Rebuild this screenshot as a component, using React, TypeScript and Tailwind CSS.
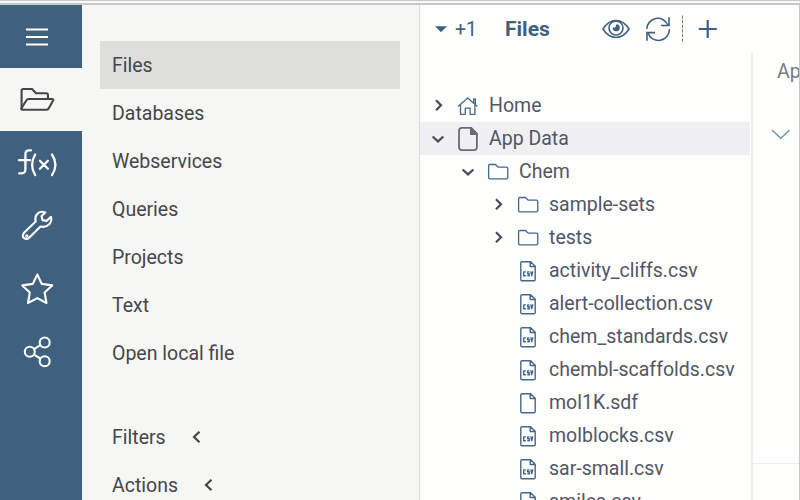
import React from "react";

type Kind = "home" | "page" | "folder" | "csv" | "file";
type Row = { label: string; kind: Kind; level: number; arrow?: "right" | "down"; selected?: boolean };

const rows: Row[] = [
  { label: "Home", kind: "home", level: 0, arrow: "right" },
  { label: "App Data", kind: "page", level: 0, arrow: "down", selected: true },
  { label: "Chem", kind: "folder", level: 1, arrow: "down" },
  { label: "sample-sets", kind: "folder", level: 2, arrow: "right" },
  { label: "tests", kind: "folder", level: 2, arrow: "right" },
  { label: "activity_cliffs.csv", kind: "csv", level: 2 },
  { label: "alert-collection.csv", kind: "csv", level: 2 },
  { label: "chem_standards.csv", kind: "csv", level: 2 },
  { label: "chembl-scaffolds.csv", kind: "csv", level: 2 },
  { label: "mol1K.sdf", kind: "file", level: 2 },
  { label: "molblocks.csv", kind: "csv", level: 2 },
  { label: "sar-small.csv", kind: "csv", level: 2 },
  { label: "smiles.csv", kind: "csv", level: 2 },
];

const navItems = ["Files", "Databases", "Webservices", "Queries", "Projects", "Text", "Open local file"];
const indents = ["pl-0", "pl-[30px]", "pl-[60px]"];

function RailIcon({ children, active = false }: { children: React.ReactNode; active?: boolean }) {
  return (
    <div className={`h-[63px] w-[82px] shrink-0 ${active ? "bg-[#f6f6f5] text-[#46464a]" : "text-[#fdfdfc]"}`}>
      <svg className="block h-[63px] w-[82px]" viewBox="0 0 82 63" fill="none" stroke="currentColor" strokeWidth="2.1" strokeLinejoin="round" strokeLinecap="round">
        {children}
      </svg>
    </div>
  );
}

function Arrow({ dir }: { dir?: "right" | "down" }) {
  return (
    <svg className="block h-[33px] w-9 shrink-0" viewBox="0 0 36 33" fill="none" stroke="#474b59" strokeWidth="2.2">
      {dir === "right" && <path d="M16 11.3 21 16.3 16 21.3" />}
      {dir === "down" && <path d="M12.6 14.5 18 19.4 23.4 14.5" />}
    </svg>
  );
}

function RowIcon({ kind }: { kind: Kind }) {
  return (
    <svg className="block h-[33px] w-[33px] shrink-0" viewBox="0 0 33 33" fill="none" stroke="#45678b" strokeWidth="1.3" strokeLinejoin="round">
      {kind === "home" && (
        <>
          <path d="M2 17.5 11.7 9 21.4 17.5M17.7 13.8V10h1.6v5.2" />
          <path d="M4.5 16v9.4h4.8v-6.2h4.8v6.2h4.8V16" />
        </>
      )}
      {kind === "page" && (
        <>
          <path stroke="#6b6b78" strokeWidth="1.8" d="M6 5.9h9L20.9 12v13q0 3.1-3 3.1H6q-3 0-3-3.1V9q0-3.1 3-3.1Z" />
          <path fill="#6b6b78" stroke="none" d="M14 5h1.5L21.8 11.5V13H14Z" />
        </>
      )}
      {kind === "folder" && (
        <path d="M3.7 9.5h5.8l2.8 2.7h8q1.5 0 1.5 1.5v8.9q0 1.2-1.3 1.2H3.8q-1.2 0-1.2-1.2V10.8q0-1.3 1.1-1.3Z" />
      )}
      {(kind === "csv" || kind === "file") && (
        <>
          <path strokeWidth="1.4" d="M6 7.7h8.6l4.6 4.6v13.2q0 1.2-1.2 1.2H6q-1.2 0-1.2-1.2V8.9Q4.8 7.7 6 7.7ZM14.2 7.7v4.8h5" />
          {kind === "csv" && (
            <path strokeWidth="1.4" d="M9.9 17.9H7.7v3.9h2.2M13.4 17.9h-1.7v1.9h1.6v2h-2M14.8 17.3l1 4.4 1-4.4" />
          )}
        </>
      )}
    </svg>
  );
}

export default function App() {
  return (
    <div className="flex h-[500px] w-[800px] flex-col overflow-hidden bg-[#fefefd] font-['Roboto',sans-serif] text-[19.5px] leading-6">
      <div className="h-[5px] shrink-0 border-b-2 border-t border-[#c8c8c9] bg-[#f8f8f8]" />
      <div className="flex min-h-0 flex-1">
        <div className="flex w-[82px] shrink-0 flex-col bg-[#40607f]">
          <RailIcon>
            <path strokeLinecap="butt" strokeWidth="2.2" d="M26 24.5H48M26 32H48M26 39.5H48" />
          </RailIcon>
          <RailIcon active>
            <path d="M21.6 41V22.5Q21.6 21 23.1 21H32l4 4.2h10q2 0 2 2V31" />
            <path d="M28.4 31H52q2 0 1 1.7l-4.2 7.5Q48 41.8 46 41.8H22.6q-2 0-1-1.8l4.9-7.8Q27.2 31 28.4 31Z" />
          </RailIcon>
          <RailIcon>
            <path d="M31 19.3h-1.8q-3.8 0-3.8 4V38.3q0 4-3.8 4H19M19 29.2h11M35.2 23.5q-6.2 10.3 0 20.6M52 23.5q6.8 10.3 0 20.6M39.9 29.8l8 8M47.9 29.8l-8 8" strokeWidth="2.3" />
          </RailIcon>
          <RailIcon>
            <path d="M45.3 18.4Q40 16.5 36.7 20.6q-2.2 3-1 6.8L24 38.8q-2.5 3.4.2 5.4 2.4 1.8 5-.5l11.3-11.2q5.2 1.4 8.7-2.2 3-3.4 1.8-7.4l-4.4 4-4.2-.8-.8-4.1Z" />
            <circle cx="26.8" cy="42.1" r=".7" />
          </RailIcon>
          <RailIcon>
            <path d="m37.3 17.5 4.4 9.4 10.5 1.5-7.6 7.2 1.9 10.4-9.2-4.9-9.3 4.9 1.8-10.4-7.5-7.2 10.5-1.5Z" />
          </RailIcon>
          <RailIcon>
            <circle cx="29.8" cy="31.8" r="5" />
            <circle cx="44.7" cy="22.5" r="5" />
            <circle cx="44.7" cy="41.2" r="5" />
            <path d="m34 29.1 6.3-3.9M34 34.6l6.3 3.9" />
          </RailIcon>
        </div>

        <div className="flex w-[338px] shrink-0 flex-col border-r border-[#dcdcdf] bg-[#f6f6f5] pl-[18px] pt-9 text-[#46464a]">
          {navItems.map((item, i) => (
            <div key={item} className={`flex h-12 w-[300px] shrink-0 items-center pl-3 pt-0.5 ${i === 0 ? "bg-[#dededd]" : ""}`}>
              {item}
            </div>
          ))}
          <div className="h-9 shrink-0" />
          {["Filters", "Actions"].map((item) => (
            <div key={item} className="flex h-12 shrink-0 items-center pl-3">
              <span className="pt-0.5">{item}</span>
              <svg className="ml-[25px] h-4 w-3" viewBox="0 0 12 16" fill="none" stroke="currentColor" strokeWidth="2.2">
                <path d="M8.5 2.8 3 8l5.5 5.2" />
              </svg>
            </div>
          ))}
        </div>

        <div className="flex min-w-0 flex-1 flex-col border-r border-[#c8c8c9]">
          <div className="flex h-12 shrink-0 items-center text-[#40607f]">
            <svg className="ml-[15px] h-6 w-3" viewBox="0 0 12 24" fill="currentColor">
              <path d="M0 9.3h12L6 15.3Z" />
            </svg>
            <span className="ml-2 w-[50px] pt-0.5">+1</span>
            <span className="w-[97px] text-[21px] font-bold">Files</span>
            <svg className="h-8 w-28" viewBox="602 13 112 32" fill="none" stroke="currentColor" strokeWidth="1.6" strokeLinejoin="round" overflow="visible">
              <path d="M603 29q5.2-8.5 13-8.5T629 29q-5.2 8.5-13 8.5T603 29Z" />
              <circle cx="616" cy="28" r="7" />
              <path fill="currentColor" stroke="none" d="M616.5 24.3a3.5 3.5 0 1 1-3.7 3.1l2.5.1Z" />
              <path d="M646.8 29a11 11 0 0 1 21.2-3.8M669.4 29.3A11 11 0 0 1 648 33" />
              <path strokeLinejoin="miter" d="M669 17.3v8.2h-8M647 40.8v-8.2h8" />
              <path stroke="#777b82" strokeWidth="1" strokeDasharray="3.2 1.4" d="M682.5 15.5v28" />
              <path strokeWidth="2.2" d="M698.8 29h18M707.7 20v18" />
            </svg>
          </div>
          <div className="flex min-h-0 flex-1">
            <div className="w-[331px] shrink-0 overflow-hidden pt-9 text-[#525665]">
              {rows.map((row) => (
                <div key={row.label} className={`flex h-[33px] w-[330px] items-center ${indents[row.level]} ${row.selected ? "bg-[#f0f0f3]" : ""}`}>
                  <Arrow dir={row.arrow} />
                  <RowIcon kind={row.kind} />
                  <span className="whitespace-nowrap">{row.label}</span>
                </div>
              ))}
            </div>
            <div className="flex min-w-0 flex-1 flex-col overflow-hidden border-l-2 border-[#eeeef2]">
              <div className="h-[411px] shrink-0 border-b border-[#eeeef2] pl-6 pt-[7px]">
                <div className="whitespace-nowrap text-[#777b85]">App Data</div>
                <svg className="-ml-[6px] mt-[42px] h-4 w-5" viewBox="0 0 20 16" fill="none" stroke="#819dab" strokeWidth="1.7">
                  <path d="m1 4 8.8 8.3L18.6 4" />
                </svg>
              </div>
            </div>
          </div>
        </div>
      </div>
    </div>
  );
}
